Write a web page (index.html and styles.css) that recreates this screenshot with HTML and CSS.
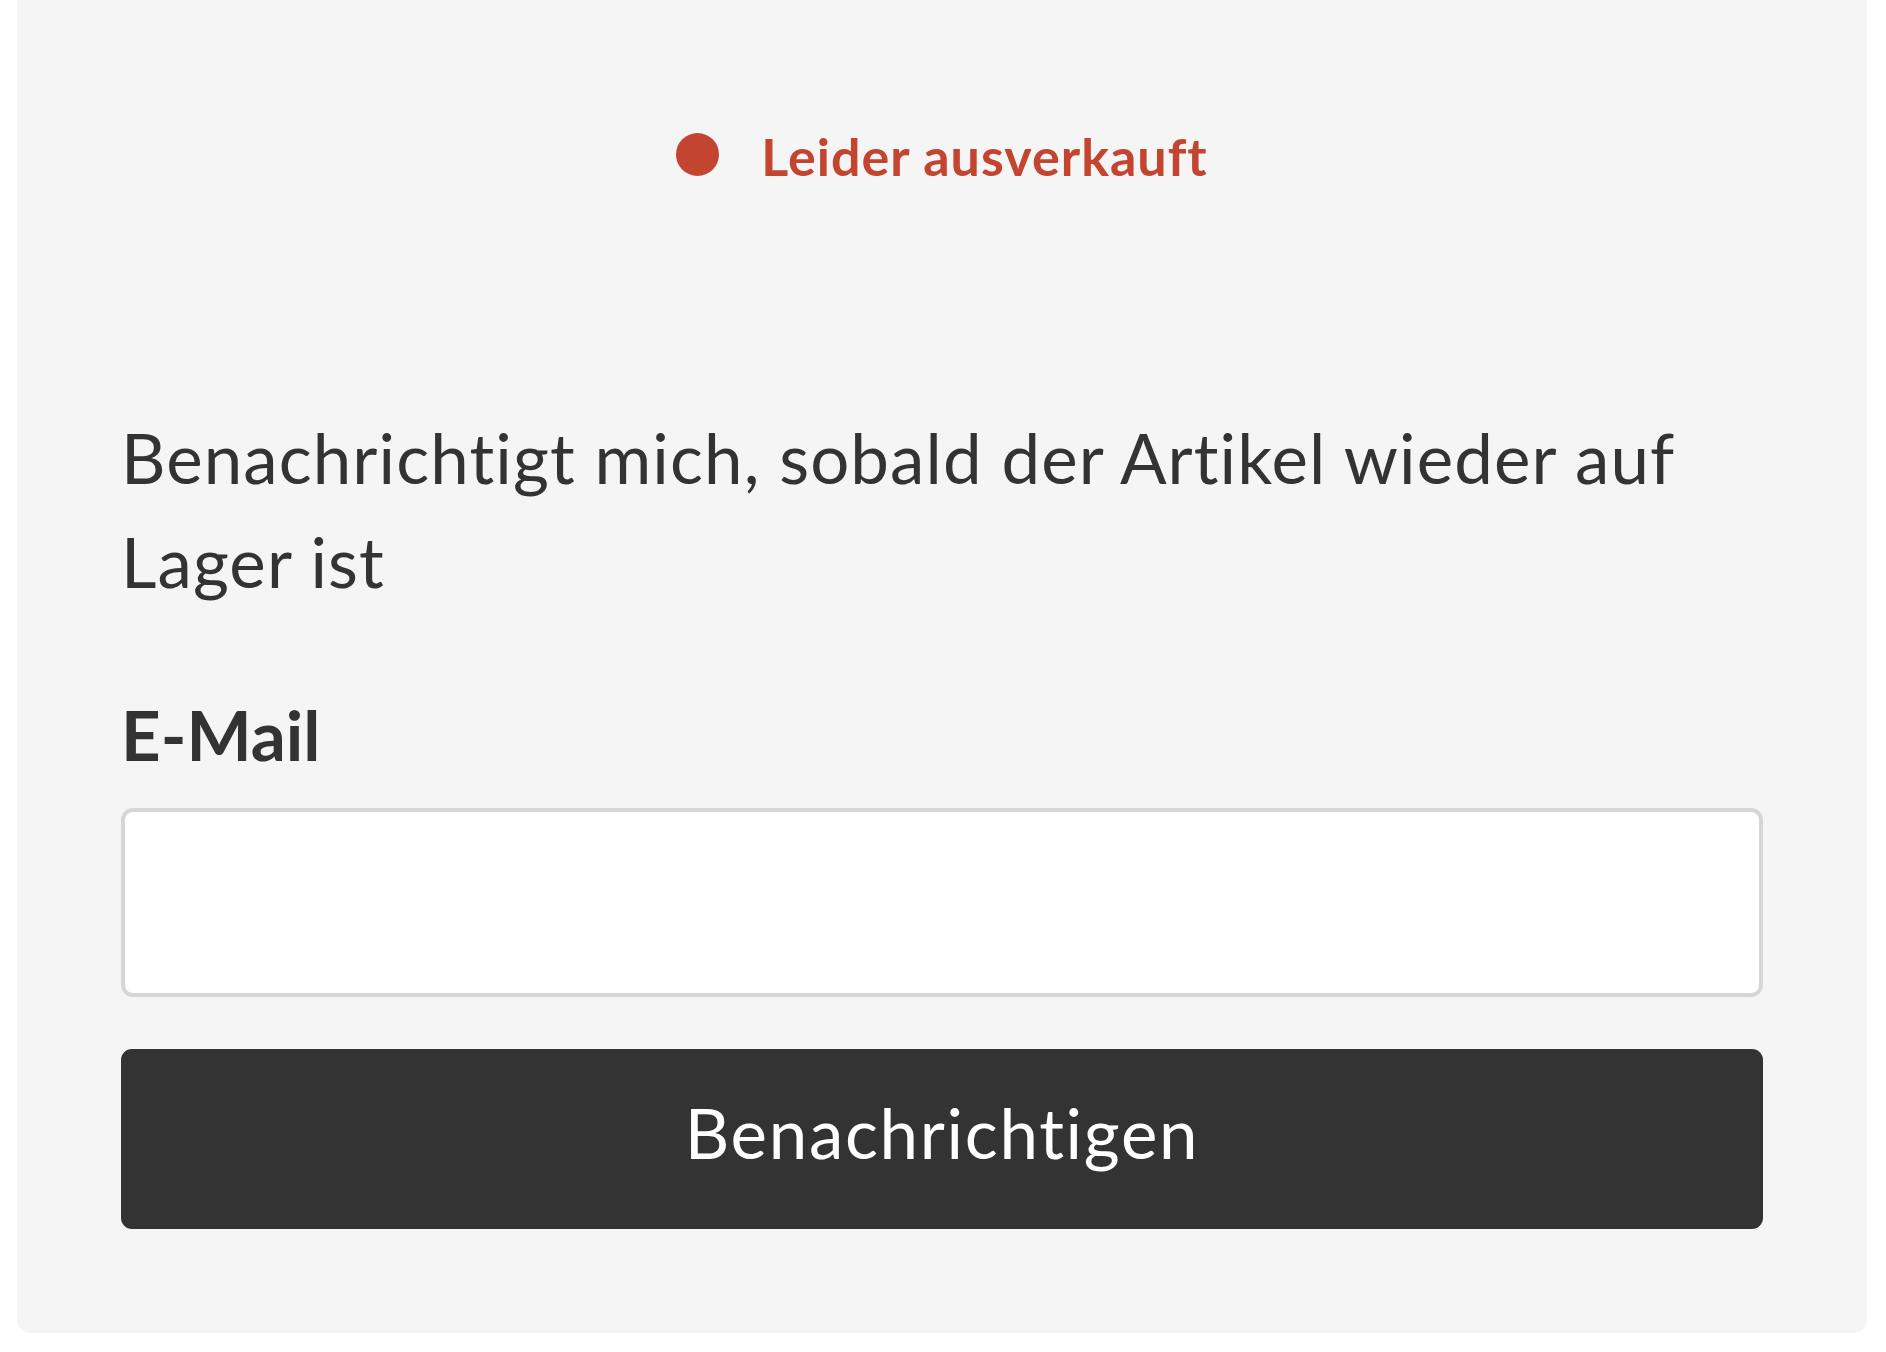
FILE: index.html
```html
<!DOCTYPE html>
<html lang="de">

<head>
  <meta charset="UTF-8" />
  <meta name="viewport" content="width=device-width, initial-scale=1.0" />
  <title>Leider ausverkauft</title>
  <link rel="stylesheet" href="styles.css">
</head>

<body>
  <div class="panel">
    <div class="stock">
      <span class="stock-dot"></span>
      <span class="stock-text">Leider ausverkauft</span>
    </div>

    <p class="notify-text">Benachrichtigt mich, sobald der Artikel wieder auf Lager ist</p>

    <form class="notify-form" onsubmit="return false;">
      <label for="email" class="field-label">E-Mail</label>
      <input id="email" type="email" class="field-input" />
      <button type="submit" class="notify-btn">Benachrichtigen</button>
    </form>
  </div>
</body>

</html>
```

FILE: styles.css
```css
* {
  box-sizing: border-box;
}

body {
  margin: 0;
  padding: 0;
  font-family: 'Lato', 'Open Sans', sans-serif;
  font-variant-ligatures: none;
  background-color: #ffffff;
  color: #333333;
}

.panel {
  width: 1850px;
  margin-left: 17px;
  padding: 117px 104px 104px;
  background-color: #f5f5f5;
  border-radius: 0 0 13px 13px;
}

.stock {
  display: flex;
  justify-content: center;
  align-items: center;
  gap: 42px;
  height: 78px;
}

.stock-dot {
  width: 43px;
  height: 43px;
  border-radius: 50%;
  background-color: #c4452f;
  margin-top: -4px;
}

.stock-text {
  font-size: 52px;
  line-height: 78px;
  font-weight: 700;
  letter-spacing: 1px;
  color: #c4452f;
}

.notify-text {
  margin: 211px 0 0;
  font-size: 69px;
  line-height: 104px;
  letter-spacing: 1.1px;
}

.notify-form {
  display: flex;
  flex-direction: column;
  margin-top: 69px;
}

.field-label {
  font-size: 69px;
  line-height: 104px;
  font-weight: 700;
}

.field-input {
  margin-top: 21px;
  height: 189px;
  width: 100%;
  border: 4px solid #d6d6d6;
  border-radius: 12px;
  background-color: #ffffff;
  font: inherit;
  font-size: 60px;
  padding: 0 30px;
}

.notify-btn {
  margin-top: 52px;
  height: 180px;
  width: 100%;
  padding: 0 0 14px;
  border: none;
  border-radius: 11px;
  background-color: #333333;
  color: #ffffff;
  font-family: inherit;
  font-variant-ligatures: none;
  font-size: 69px;
  letter-spacing: 1.7px;
  cursor: pointer;
}
```
